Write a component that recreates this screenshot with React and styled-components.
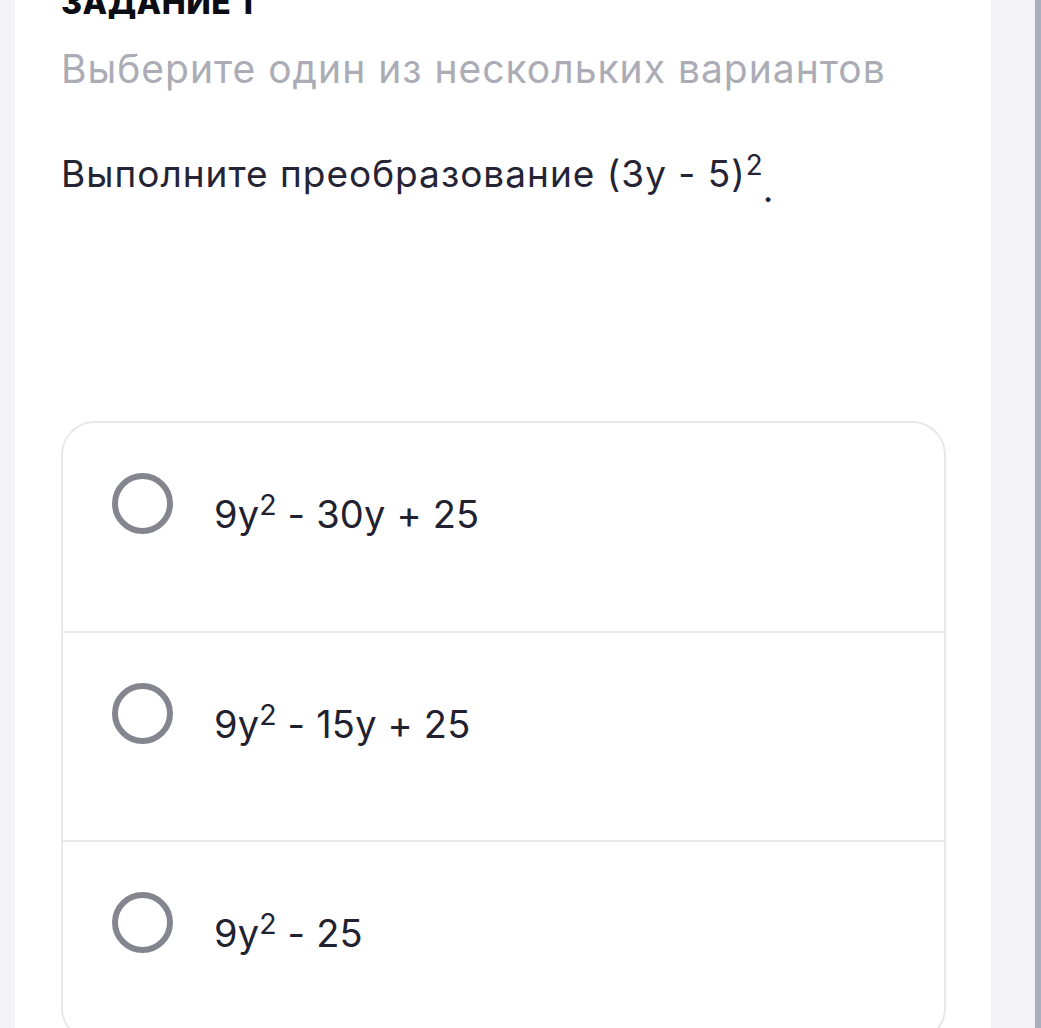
import React from "react";
import styled, { createGlobalStyle } from "styled-components";

const Global = createGlobalStyle`
  html, body { margin: 0; padding: 0; }
  body {
    background: #f3f2f7;
    font-family: Inter, "Noto Sans", "Liberation Sans", sans-serif;
    overflow: hidden;
  }
`;

const Page = styled.div`
  display: flex;
  width: 1041px;
  height: 1028px;
  overflow: hidden;
  background: #f3f2f7;
`;

const Gutter = styled.div`
  width: ${(p) => p.$w}px;
  flex-shrink: 0;
`;

const Scrollbar = styled.div`
  width: 6px;
  flex-shrink: 0;
  background: #a9aec0;
`;

const Panel = styled.main`
  width: 976px;
  flex-shrink: 0;
  background: #ffffff;
  padding: 0 45px 0 46px;
  box-sizing: border-box;
  display: flex;
  flex-direction: column;
`;

const Title = styled.h2`
  margin: -13px 0 0;
  font-size: 32px;
  line-height: 32px;
  font-weight: 800;
  color: #0c0c14;
  letter-spacing: 0.5px;
`;

const Subtitle = styled.p`
  margin: 26px 0 0;
  font-size: 39px;
  line-height: 47px;
  color: #abacb6;
  font-weight: 400;
  letter-spacing: 1px;
  white-space: nowrap;
`;

const Question = styled.p`
  margin: 59px 0 0;
  font-size: 37px;
  line-height: 45px;
  height: 45px;
  color: #252434;
  font-weight: 400;
  letter-spacing: 1px;
  white-space: nowrap;
`;

const Sup = styled.sup`
  font-size: 0.75em;
  line-height: 0;
  vertical-align: 0.45em;
  letter-spacing: 0;
`;

const LowDot = styled.span`
  vertical-align: -0.4em;
  line-height: 0;
`;

const Options = styled.div`
  margin-top: 225px;
  border: 2px solid #e8e8eb;
  border-radius: 34px;
  display: flex;
  flex-direction: column;
  flex-shrink: 0;
`;

const Option = styled.label`
  display: flex;
  align-items: flex-start;
  gap: 41px;
  height: ${(p) => p.$h}px;
  padding: 50px 50px 0 49px;
  box-sizing: border-box;
  border-top: ${(p) => (p.$first ? "none" : "2px solid #e8e8eb")};
  cursor: pointer;
`;

const Radio = styled.span`
  width: 61px;
  height: 61px;
  border-radius: 50%;
  border: 6px solid #858590;
  box-sizing: border-box;
  flex-shrink: 0;
`;

const OptionText = styled.span`
  font-size: 38px;
  line-height: 61px;
  color: #22212f;
  padding-top: 11px;
  letter-spacing: 0.2px;
`;

const options = [
  { pre: "9y", rest: " - 30y + 25", h: 208 },
  { pre: "9y", rest: " - 15y + 25", h: 209 },
  { pre: "9y", rest: " - 25", h: 200 },
];

export default function App() {
  return (
    <>
      <Global />
      <Page>
        <Gutter $w={15} />
        <Panel>
          <Title>ЗАДАНИЕ 1</Title>
          <Subtitle>Выберите один из нескольких вариантов</Subtitle>
          <Question>
            Выполните преобразование (3y - 5)<Sup>2</Sup>
            <LowDot>.</LowDot>
          </Question>
          <Options>
            {options.map((o, i) => (
              <Option key={i} $first={i === 0} $h={o.h}>
                <Radio />
                <OptionText>
                  {o.pre}
                  <Sup>2</Sup>
                  {o.rest}
                </OptionText>
              </Option>
            ))}
          </Options>
        </Panel>
        <Gutter $w={44} />
        <Scrollbar />
      </Page>
    </>
  );
}
